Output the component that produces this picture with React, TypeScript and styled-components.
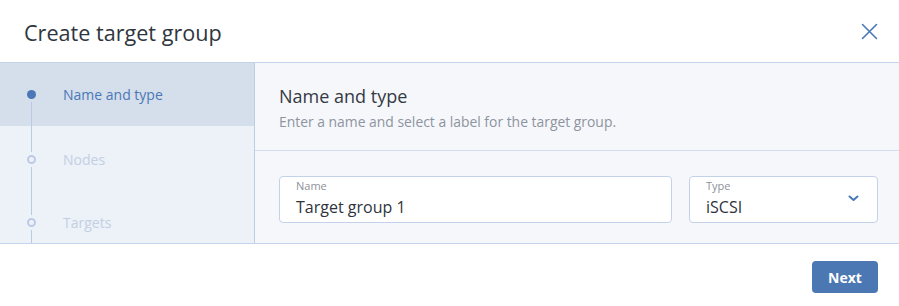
import * as React from "react";
import styled, { createGlobalStyle } from "styled-components";

const GlobalStyle = createGlobalStyle`
  html, body {
    margin: 0;
    padding: 0;
    background: #ffffff;
  }
  body {
    font-family: "Open Sans", "Liberation Sans", sans-serif;
    color: #2e3440;
  }
`;

const Dialog = styled.div`
  width: 899px;
  height: 306px;
  display: flex;
  flex-direction: column;
  background: #ffffff;
`;

const Header = styled.div`
  height: 62px;
  display: flex;
  align-items: center;
  justify-content: space-between;
  padding: 0 20px 0 24px;
  border-bottom: 1px solid #c3d3ea;
`;

const Title = styled.h1`
  margin: 2px 0 0 0;
  font-size: 21.6px;
  font-weight: 400;
  color: #2f3640;
`;

const CloseButton = styled.button`
  width: 20px;
  height: 20px;
  padding: 0;
  border: none;
  background: transparent;
  display: flex;
  align-items: center;
  justify-content: center;
  cursor: pointer;
`;

const Body = styled.div`
  display: flex;
  height: 180px;
  border-bottom: 1px solid #c3d3ea;
`;

const Sidebar = styled.div`
  width: 254px;
  flex-shrink: 0;
  background: #edf1f8;
  border-right: 1px solid #bccde6;
  overflow: hidden;
`;

const Step = styled.div<{ $active?: boolean; $gap?: boolean }>`
  position: relative;
  height: 63px;
  display: flex;
  align-items: center;
  padding-left: 63px;
  font-size: 14px;
  color: ${(p) => (p.$active ? "#4a78b6" : "#c3d0e4")};
  background: ${(p) => (p.$active ? "#d5deeb" : "transparent")};
  margin-top: ${(p) => (p.$gap ? "2px" : "0")};
`;

const StepLine = styled.span<{ $top: boolean; $bottom: boolean }>`
  position: absolute;
  left: 31px;
  width: 1px;
  top: ${(p) => (p.$top ? "-2px" : "50%")};
  bottom: ${(p) => (p.$bottom ? "0" : "50%")};
  background: #b9cae3;
`;

const StepDot = styled.span<{ $active?: boolean }>`
  position: absolute;
  left: 27px;
  top: 50%;
  margin-top: -5px;
  width: 9px;
  height: 9px;
  box-sizing: border-box;
  border-radius: 50%;
  background: ${(p) => (p.$active ? "#4a78b6" : "#edf1f8")};
  border: ${(p) => (p.$active ? "none" : "2px solid #bccbe3")};
  box-shadow: 0 0 0 3px ${(p) => (p.$active ? "#d5deeb" : "#edf1f8")};
`;

const Content = styled.div`
  flex: 1;
  background: #f5f7fb;
  display: flex;
  flex-direction: column;
`;

const ContentHeader = styled.div`
  height: 88px;
  box-sizing: border-box;
  padding: 21px 24px 0 24px;
  border-bottom: 1px solid #d3dfee;
`;

const SectionTitle = styled.h2`
  margin: 0;
  font-size: 18px;
  font-weight: 400;
  color: #343a44;
  line-height: 24px;
`;

const SectionHint = styled.p`
  margin: 5px 0 0 0;
  font-size: 13.9px;
  color: #8d949e;
  line-height: 18px;
`;

const Fields = styled.div`
  display: flex;
  gap: 17px;
  padding: 25px 21px 0 24px;
`;

const Field = styled.div<{ $width?: number }>`
  position: relative;
  flex: ${(p) => (p.$width ? `0 0 ${p.$width}px` : "1")};
  height: 47px;
  box-sizing: border-box;
  background: #ffffff;
  border: 1px solid #c3d2e8;
  border-radius: 4px;
  padding: 1px 16px 0 16px;
  display: flex;
  flex-direction: column;
`;

const FieldLabel = styled.span`
  font-size: 11px;
  line-height: 16px;
  color: #8c929b;
`;

const FieldValue = styled.span`
  margin-top: 2px;
  font-size: 16px;
  line-height: 22px;
  color: #2f343c;
`;

const Chevron = styled.span`
  position: absolute;
  right: 18px;
  top: 18px;
  display: flex;
`;

const Footer = styled.div`
  flex: 1;
  display: flex;
  justify-content: flex-end;
  align-items: flex-start;
  padding: 17px 21px 0 0;
`;

const PrimaryButton = styled.button`
  width: 66px;
  height: 32px;
  border: none;
  border-radius: 4px;
  background: #4b77b3;
  color: #ffffff;
  font-family: "Open Sans", "Liberation Sans", sans-serif;
  font-size: 14px;
  font-weight: 700;
  cursor: pointer;
`;

const steps = ["Name and type", "Nodes", "Targets"];

export default function App() {
  return (
    <>
      <GlobalStyle />
      <Dialog>
        <Header>
          <Title>Create target group</Title>
          <CloseButton aria-label="Close">
            <svg width="17" height="17" viewBox="0 0 17 17">
              <path d="M1.5 1.5 L15.5 15.5 M15.5 1.5 L1.5 15.5" stroke="#4a78b6" strokeWidth="1.6" strokeLinecap="round" />
            </svg>
          </CloseButton>
        </Header>
        <Body>
          <Sidebar>
            {steps.map((s, i) => (
              <Step key={s} $active={i === 0} $gap={i === 1}>
                <StepLine $top={i > 0} $bottom={true} />
                <StepDot $active={i === 0} />
                {s}
              </Step>
            ))}
          </Sidebar>
          <Content>
            <ContentHeader>
              <SectionTitle>Name and type</SectionTitle>
              <SectionHint>Enter a name and select a label for the target group.</SectionHint>
            </ContentHeader>
            <Fields>
              <Field>
                <FieldLabel>Name</FieldLabel>
                <FieldValue>Target group 1</FieldValue>
              </Field>
              <Field $width={189}>
                <FieldLabel>Type</FieldLabel>
                <FieldValue>iSCSI</FieldValue>
                <Chevron>
                  <svg width="11" height="7" viewBox="0 0 11 7">
                    <path d="M1.5 1.5 L5.5 5 L9.5 1.5" stroke="#4a78b6" strokeWidth="2" fill="none" strokeLinecap="round" strokeLinejoin="round" />
                  </svg>
                </Chevron>
              </Field>
            </Fields>
          </Content>
        </Body>
        <Footer>
          <PrimaryButton>Next</PrimaryButton>
        </Footer>
      </Dialog>
    </>
  );
}
